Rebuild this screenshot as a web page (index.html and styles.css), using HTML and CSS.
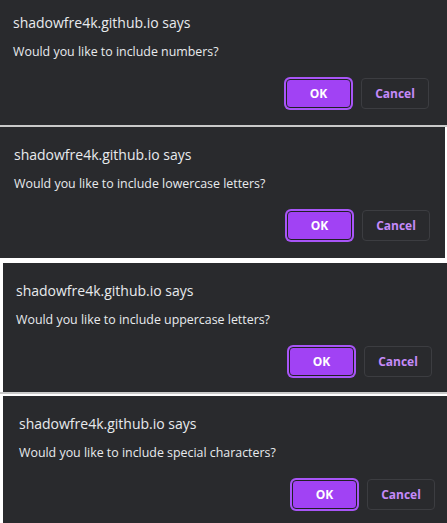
FILE: index.html
```html
<!DOCTYPE html>
<html>
<head>
<meta charset="utf-8">
<link rel="stylesheet" href="styles.css">
</head>
<body>
  <div class="panel panel-1">
    <div class="dialog">
      <div class="title">shadowfre4k.github.io says</div>
      <div class="message">Would you like to include numbers?</div>
      <div class="actions">
        <button class="btn btn-ok">OK</button>
        <button class="btn btn-cancel">Cancel</button>
      </div>
    </div>
  </div>
  <div class="sep sep-gray"></div>
  <div class="panel panel-2">
    <div class="dialog">
      <div class="title">shadowfre4k.github.io says</div>
      <div class="message">Would you like to include lowercase letters?</div>
      <div class="actions">
        <button class="btn btn-ok">OK</button>
        <button class="btn btn-cancel">Cancel</button>
      </div>
    </div>
  </div>
  <div class="sep sep-white"></div>
  <div class="panel panel-3">
    <div class="dialog">
      <div class="title">shadowfre4k.github.io says</div>
      <div class="message">Would you like to include uppercase letters?</div>
      <div class="actions">
        <button class="btn btn-ok">OK</button>
        <button class="btn btn-cancel">Cancel</button>
      </div>
    </div>
  </div>
  <div class="sep sep-gray"></div>
  <div class="sep sep-white-thin"></div>
  <div class="panel panel-4">
    <div class="dialog">
      <div class="title">shadowfre4k.github.io says</div>
      <div class="message">Would you like to include special characters?</div>
      <div class="actions">
        <button class="btn btn-ok">OK</button>
        <button class="btn btn-cancel">Cancel</button>
      </div>
    </div>
  </div>
</body>
</html>
```
FILE: styles.css
```css
html, body {
  margin: 0;
  padding: 0;
  background: #ffffff;
  width: 447px;
  height: 523px;
  overflow: hidden;
}

body {
  font-family: "Open Sans", "Noto Sans", sans-serif;
  color: #e8eaed;
}

.panel {
  background: #292a2d;
  overflow: hidden;
  display: flex;
}

.panel-1 {
  height: 125px;
  width: 447px;
  align-items: flex-end;
}

.panel-2 {
  height: 131px;
  width: 445px;
  align-items: flex-start;
}

.panel-3 {
  height: 129px;
  width: 444px;
  margin-left: 3px;
}

.panel-4 {
  height: 127px;
  width: 444px;
  margin-left: 3px;
}

.dialog {
  flex: none;
  width: 444px;
  box-sizing: border-box;
  padding: 18px 15px 0 13px;
}

.panel-1 .dialog {
  padding-top: 13px;
  height: 125px;
}

.panel-2 .dialog {
  padding-left: 14px;
  padding-right: 15px;
  width: 445px;
}

.panel-4 .dialog {
  padding-left: 16px;
  padding-right: 12px;
}

.title {
  font-size: 14px;
  line-height: 20px;
  height: 20px;
  white-space: nowrap;
}

.message {
  margin-top: 10px;
  font-size: 12.4px;
  line-height: 18px;
  height: 18px;
  white-space: nowrap;
}

.actions {
  display: flex;
  justify-content: flex-end;
  align-items: center;
  gap: 10px;
  margin-top: 17px;
}

.btn {
  font-family: "Open Sans", "Noto Sans", sans-serif;
  font-weight: 700;
  font-size: 12px;
  box-sizing: border-box;
  border-radius: 4px;
  padding: 0;
  cursor: default;
}

.btn-ok {
  width: 65px;
  height: 29px;
  background: #a142f4;
  color: #ffffff;
  border: 1px solid #202124;
  box-shadow: 0 0 0 2px #a855f7;
}

.btn-cancel {
  width: 68px;
  height: 31px;
  background: #292a2d;
  color: #c58af9;
  border: 1px solid #3c3d41;
}

.sep {
  width: 447px;
}

.sep-gray {
  height: 2px;
  background: #c9c9c9;
}

.sep-white {
  height: 5px;
  background: #ffffff;
}

.sep-white-thin {
  height: 2px;
  background: #ffffff;
}
```
